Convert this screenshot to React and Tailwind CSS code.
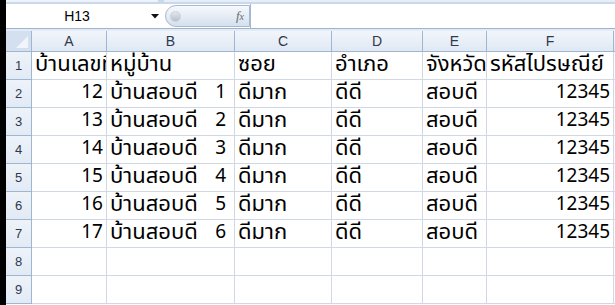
import React from "react";

const cols = [
  { l: "A", w: 75 },
  { l: "B", w: 128 },
  { l: "C", w: 97 },
  { l: "D", w: 91 },
  { l: "E", w: 64 },
  { l: "F", w: 127 },
];

const rows = [
  ["บ้านเลขที่", "หมู่บ้าน", "ซอย", "อำเภอ", "จังหวัด", "รหัสไปรษณีย์"],
  ...[12, 13, 14, 15, 16, 17].map((n, i) => [String(n), ["บ้านสอบดี", String(i + 1)], "ดีมาก", "ดีดี", "สอบดี", "12345"]),
  ["", "", "", "", "", ""],
  ["", "", "", "", "", ""],
];

const cellFont = { fontFamily: "'Tahoma','Noto Sans Thai','Loma','Garuda','Lato','Liberation Sans',sans-serif" };

export default function App() {
  return (
    <div className="w-[615px] h-[305px] overflow-hidden flex bg-white">
      <div className="w-[6px] shrink-0 bg-black" />
      <div className="flex-1 flex flex-col min-w-0">
        {/* ribbon bottom */}
        <div className="h-[4px] flex bg-[#c9d8ea]">
          <div className="w-[152px] h-[2px] bg-[#eef3fa]" />
          <div className="w-[6px]" />
          <div className="flex-1 h-[2px] bg-[#e6edf7]" />
        </div>
        {/* formula bar */}
        <div className="h-[24px] flex items-stretch bg-white">
          <div className="w-[142px] flex items-center justify-center text-[14px] text-black" style={{ fontFamily: "'Liberation Sans',sans-serif" }}>
            H13
          </div>
          <div className="w-[14px] flex items-center justify-center">
            <svg width="8" height="5" viewBox="0 0 8 5"><path d="M0 0h8L4 4.5z" fill="#111" /></svg>
          </div>
          <div className="w-[3px]" />
          <div className="w-[85px] my-[1px] rounded-l-full border border-[#a7b9d0] bg-gradient-to-b from-[#f6f9fd] to-[#d5e0ee] flex items-center justify-between pl-[4px] pr-[5px]">
            <div className="w-[11px] h-[11px] rounded-full bg-gradient-to-b from-[#e4e8ee] to-[#b7c0cc] border border-[#c9d0da]" />
            <span className="text-[13px] italic text-[#6a6a6a]" style={{ fontFamily: "'Liberation Serif',serif" }}>f<span className="text-[10px]">x</span></span>
          </div>
          <div className="w-px bg-[#a7b9d0]" />
          <div className="flex-1" />
        </div>
        <div className="h-px bg-[#9fb3cc]" />
        <div className="h-[2px] bg-[#e3ebf6]" />
        {/* header row */}
        <div className="flex h-[21px] border-b border-[#9eb6ce]">
          <div className="w-[26px] shrink-0 border-r border-[#9eb6ce] bg-[#d4e0f0] relative">
            <svg className="absolute right-[3px] bottom-[3px]" width="12" height="12" viewBox="0 0 12 12"><path d="M12 0V12H0z" fill="#f1f5fb" /></svg>
          </div>
          {cols.map((c) => (
            <div key={c.l} style={{ width: c.w, fontFamily: "'Liberation Sans',sans-serif" }} className="shrink-0 border-r border-[#9eb6ce] bg-gradient-to-b from-[#f2f6fb] to-[#dfe8f4] flex items-center justify-center text-[14px] text-[#30394a]">
              {c.l}
            </div>
          ))}
          <div className="flex-1 bg-gradient-to-b from-[#f2f6fb] to-[#dfe8f4]" />
        </div>
        {rows.map((r, ri) => (
          <div key={ri} className="flex h-[28px] shrink-0">
            <div className="w-[26px] shrink-0 border-r border-b border-[#9eb6ce] bg-gradient-to-b from-[#eef3f9] to-[#e2eaf5] flex items-center justify-center text-[13px] text-[#30394a]" style={{ fontFamily: "'Liberation Sans',sans-serif" }}>
              {ri + 1}
            </div>
            {r.map((v, ci) => {
              const isNum = ri > 0 && (ci === 0 || ci === 5);
              return (
                <div key={ci} style={{ width: cols[ci].w, ...cellFont }} className={`shrink-0 border-r border-b border-[#d0d7e5] overflow-hidden whitespace-nowrap flex items-end pb-[1px] px-[3px] leading-[26px] text-black ${isNum ? "justify-end text-[19px]" : "justify-start text-[22px]"}`}>
                  {Array.isArray(v) ? (
                    <div className="flex w-full justify-between items-end">
                      <span className="text-[22px]">{v[0]}</span>
                      <span className="text-[19px] mr-[5px]">{v[1]}</span>
                    </div>
                  ) : (
                    v
                  )}
                </div>
              );
            })}
            <div className="flex-1 border-b border-[#d0d7e5]" />
          </div>
        ))}
      </div>
    </div>
  );
}
